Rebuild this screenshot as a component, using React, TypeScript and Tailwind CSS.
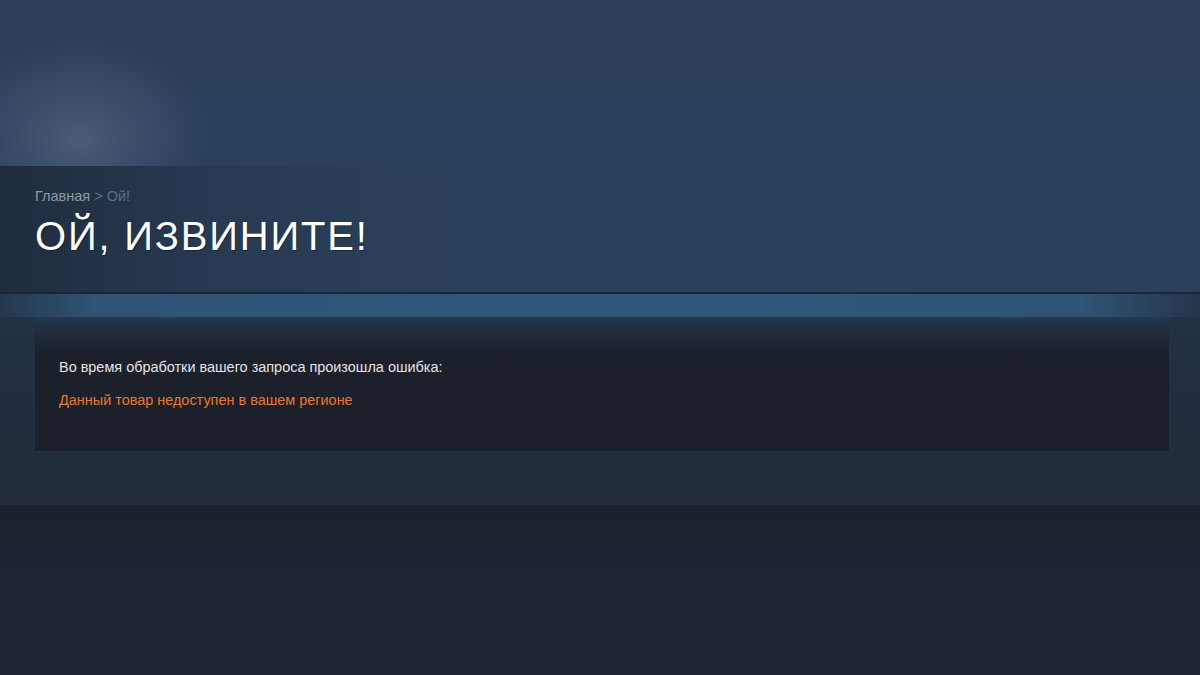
import React from "react";

export default function App() {
  return (
    <div
      className="w-[1200px] h-[675px] overflow-hidden relative bg-[#1d2431]"
      style={{ fontFamily: '"Liberation Sans", Arial, sans-serif' }}
    >
      {/* top area */}
      <div className="relative h-[166px] bg-[linear-gradient(180deg,#2c3f57_0%,#2b405a_60%,#2a3f5a_100%)] overflow-hidden">
        <div className="absolute left-[-50px] top-[40px] w-[260px] h-[200px] rounded-full bg-[radial-gradient(ellipse_at_center,rgba(105,120,145,0.5)_0%,rgba(90,108,135,0.3)_35%,rgba(60,80,110,0)_70%)]" />
      </div>
      {/* header band */}
      <div className="relative h-[126px] bg-[linear-gradient(90deg,#1f2c3e_0%,#273a52_18%,#2b405a_40%,#2b405a_100%)] px-[35px] pt-[22px]">
        <div className="text-[14.5px] leading-[17px] text-[#8f98a0]">
          Главная <span className="text-[#57718a]">&gt; Ой!</span>
        </div>
        <h1 className="mt-[9px] text-[40px] leading-[44px] text-white tracking-[1.8px] [text-shadow:1px_1px_0_rgba(0,0,0,0.35)]">
          ОЙ, ИЗВИНИТЕ!
        </h1>
      </div>
      {/* separator */}
      <div className="h-[2px] bg-[#1a2535]" />
      <div className="h-[23px] bg-[linear-gradient(90deg,#23384e_0%,#2f5475_8%,#30577a_50%,#2f5475_90%,#24364b_100%)]" />
      {/* content */}
      <div className="bg-[linear-gradient(180deg,#233144_0%,#212b3a_100%)] h-[188px] pl-[35px] pr-[31px]">
        <div className="h-[134px] bg-[linear-gradient(180deg,#24384f_0%,#1f2938_15%,#1b202b_30%,#1b202b_100%)] px-[24px] pt-[41px]">
          <div className="text-[14.45px] leading-[18px] text-[#e4e4e4]">
            Во время обработки вашего запроса произошла ошибка:
          </div>
          <div className="mt-[15px] text-[14.45px] leading-[18px] text-[#e8772d]">
            Данный товар недоступен в вашем регионе
          </div>
        </div>
      </div>
      {/* footer area */}
      <div className="h-[170px] bg-[linear-gradient(180deg,#1b212c_0%,#1d2330_30%,#1f2533_100%)]" />
    </div>
  );
}
